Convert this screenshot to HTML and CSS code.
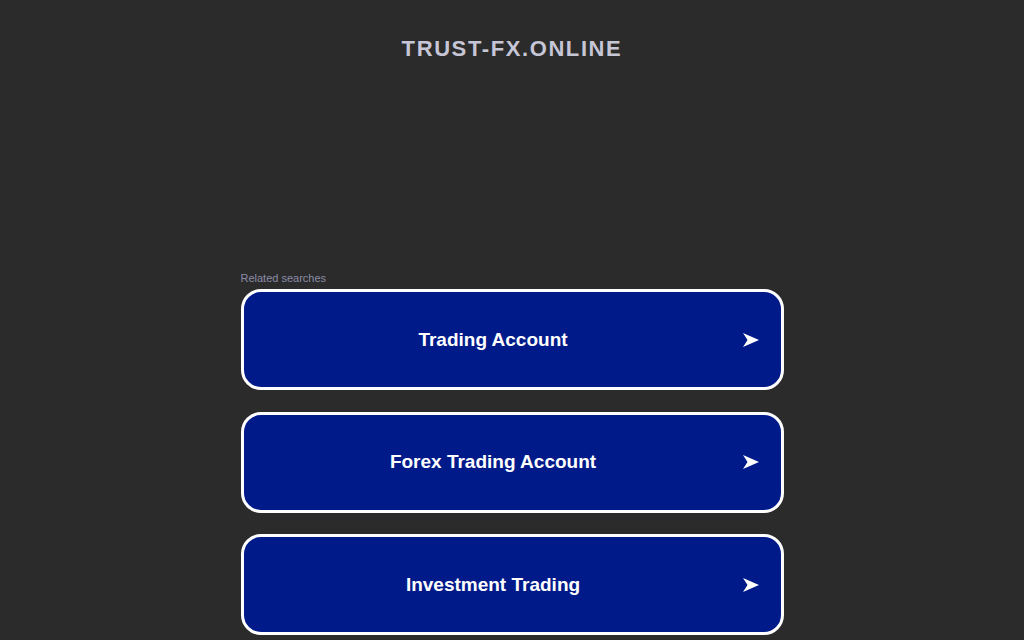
FILE: index.html
```html
<!DOCTYPE html>
<html lang="en">
<head>
<meta charset="utf-8">
<title>trust-fx.online</title>
<link rel="stylesheet" href="styles.css">
</head>
<body>
<header class="header">
  <h1 class="domain">TRUST-FX.ONLINE</h1>
</header>
<main class="content">
  <section class="related">
    <p class="related-title">Related searches</p>
    <ul class="links">
      <li><a class="link" href="#"><span class="link-text">Trading Account</span><svg class="arrow" viewBox="0 0 16 14" width="16" height="14"><path d="M0 0 L16 7 L0 14 L4.5 7 Z" fill="#fff"/></svg></a></li>
      <li><a class="link" href="#"><span class="link-text">Forex Trading Account</span><svg class="arrow" viewBox="0 0 16 14" width="16" height="14"><path d="M0 0 L16 7 L0 14 L4.5 7 Z" fill="#fff"/></svg></a></li>
      <li><a class="link" href="#"><span class="link-text">Investment Trading</span><svg class="arrow" viewBox="0 0 16 14" width="16" height="14"><path d="M0 0 L16 7 L0 14 L4.5 7 Z" fill="#fff"/></svg></a></li>
    </ul>
  </section>
</main>
</body>
</html>
```
FILE: styles.css
```css
html, body {
  margin: 0;
  padding: 0;
  background: #2b2b2b;
  font-family: "Liberation Sans", Arial, sans-serif;
  overflow: hidden;
}
.header {
  padding-top: 36px;
  text-align: center;
}
.domain {
  margin: 0;
  font-size: 22px;
  line-height: 25px;
  font-weight: bold;
  letter-spacing: 1.6px;
  color: #c6c6d6;
}
.content {
  display: flex;
  justify-content: center;
  margin-top: 210px;
}
.related {
  width: 543px;
}
.related-title {
  margin: 0 0 4px 0;
  font-size: 11px;
  line-height: 14px;
  color: #8a8ca6;
}
.links {
  list-style: none;
  margin: 0;
  padding: 0;
  display: flex;
  flex-direction: column;
  gap: 21.5px;
}
.link {
  box-sizing: border-box;
  height: 101px;
  display: flex;
  align-items: center;
  padding: 0 22px 0 0;
  border: 3px solid #ffffff;
  border-radius: 20px;
  background: #011a8a;
  color: #ffffff;
  text-decoration: none;
}
.link-text {
  flex: 1;
  text-align: center;
  font-size: 19px;
  font-weight: bold;
}
.arrow {
  flex: none;
  display: block;
}
```
